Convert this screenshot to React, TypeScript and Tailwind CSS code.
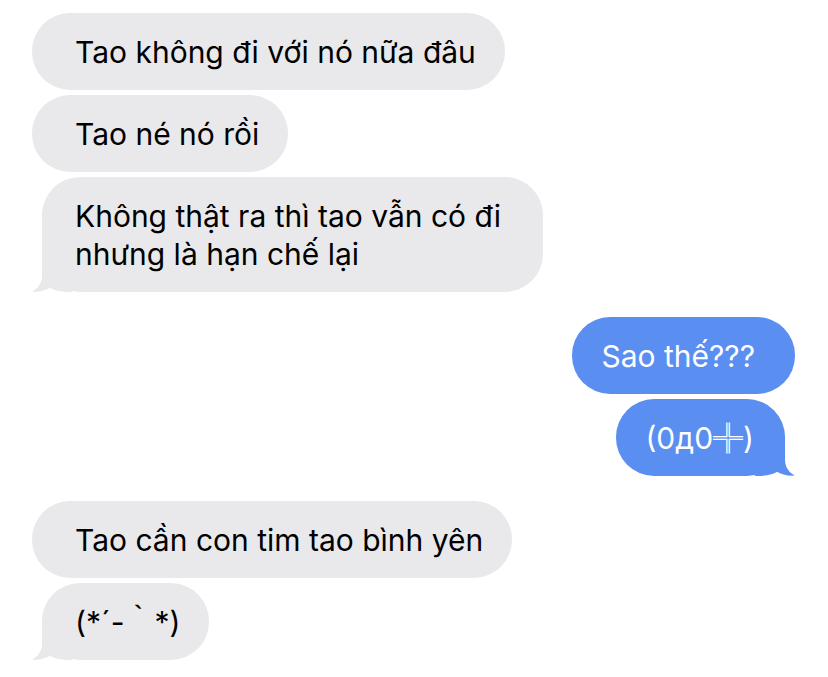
import React from 'react'

type Msg = { text: React.ReactNode; tail?: boolean; extra?: string }

const GRAY = '#e9e9eb'
const BLUE = '#5a8ef0'

function Tail({ color, side }: { color: string; side: 'left' | 'right' }) {
  return (
    <svg
      width="40"
      height="40"
      viewBox="0 0 40 40"
      className={`absolute bottom-0 ${side === 'left' ? '-left-[10px]' : '-right-[10px] -scale-x-100'}`}
    >
      <path d="M10,0 L10,24 C10,32 5,37 0,39.6 C7,40.2 14,38.5 18,35.8 C22,38.5 28,40 40,40 L40,0 Z" fill={color} />
    </svg>
  )
}

function Received({ text, tail, extra }: Msg) {
  return (
    <div
      className={`relative rounded-[38px] bg-[#e9e9eb] py-[19.5px] text-black ${tail ? 'ml-[10px] pl-[33px]' : 'pl-[43px]'} ${extra ?? 'pr-[29px]'}`}
    >
      {tail && <Tail color={GRAY} side="left" />}
      <span className="relative">{text}</span>
    </div>
  )
}

function Sent({ text, tail }: Msg) {
  return (
    <div
      className={`relative self-end rounded-[38px] bg-[#5a8ef0] py-[19.5px] pl-[29px] text-white ${tail ? 'mr-[10px] pr-[31px]' : 'pr-[40px]'}`}
    >
      {tail && <Tail color={BLUE} side="right" />}
      <span className="relative">{text}</span>
    </div>
  )
}

export default function App() {
  return (
    <div
      className="w-[828px] h-[677px] overflow-hidden bg-white pt-[13px] pl-[32px] pr-[33px] text-[30px] leading-[38px]"
      style={{ fontFamily: 'Inter, "Noto Sans", "Noto Sans CJK JP", sans-serif' }}
    >
      <div className="flex flex-col items-start gap-[5px]">
        <Received text="Tao không đi với nó nữa đâu" />
        <Received text="Tao né nó rồi" />
        <Received
          tail
          extra="pr-[42px]"
          text={
            <>
              Không thật ra thì tao vẫn có đi
              <br />
              nhưng là hạn chế lại
            </>
          }
        />
        <div className="h-[15px]" />
        <Sent text="Sao thế???" />
        <Sent tail text="(0д0╬)" />
        <div className="h-[15px]" />
        <Received text="Tao cần con tim tao bình yên" />
        <Received tail text="(*´-｀*)" />
      </div>
    </div>
  )
}
